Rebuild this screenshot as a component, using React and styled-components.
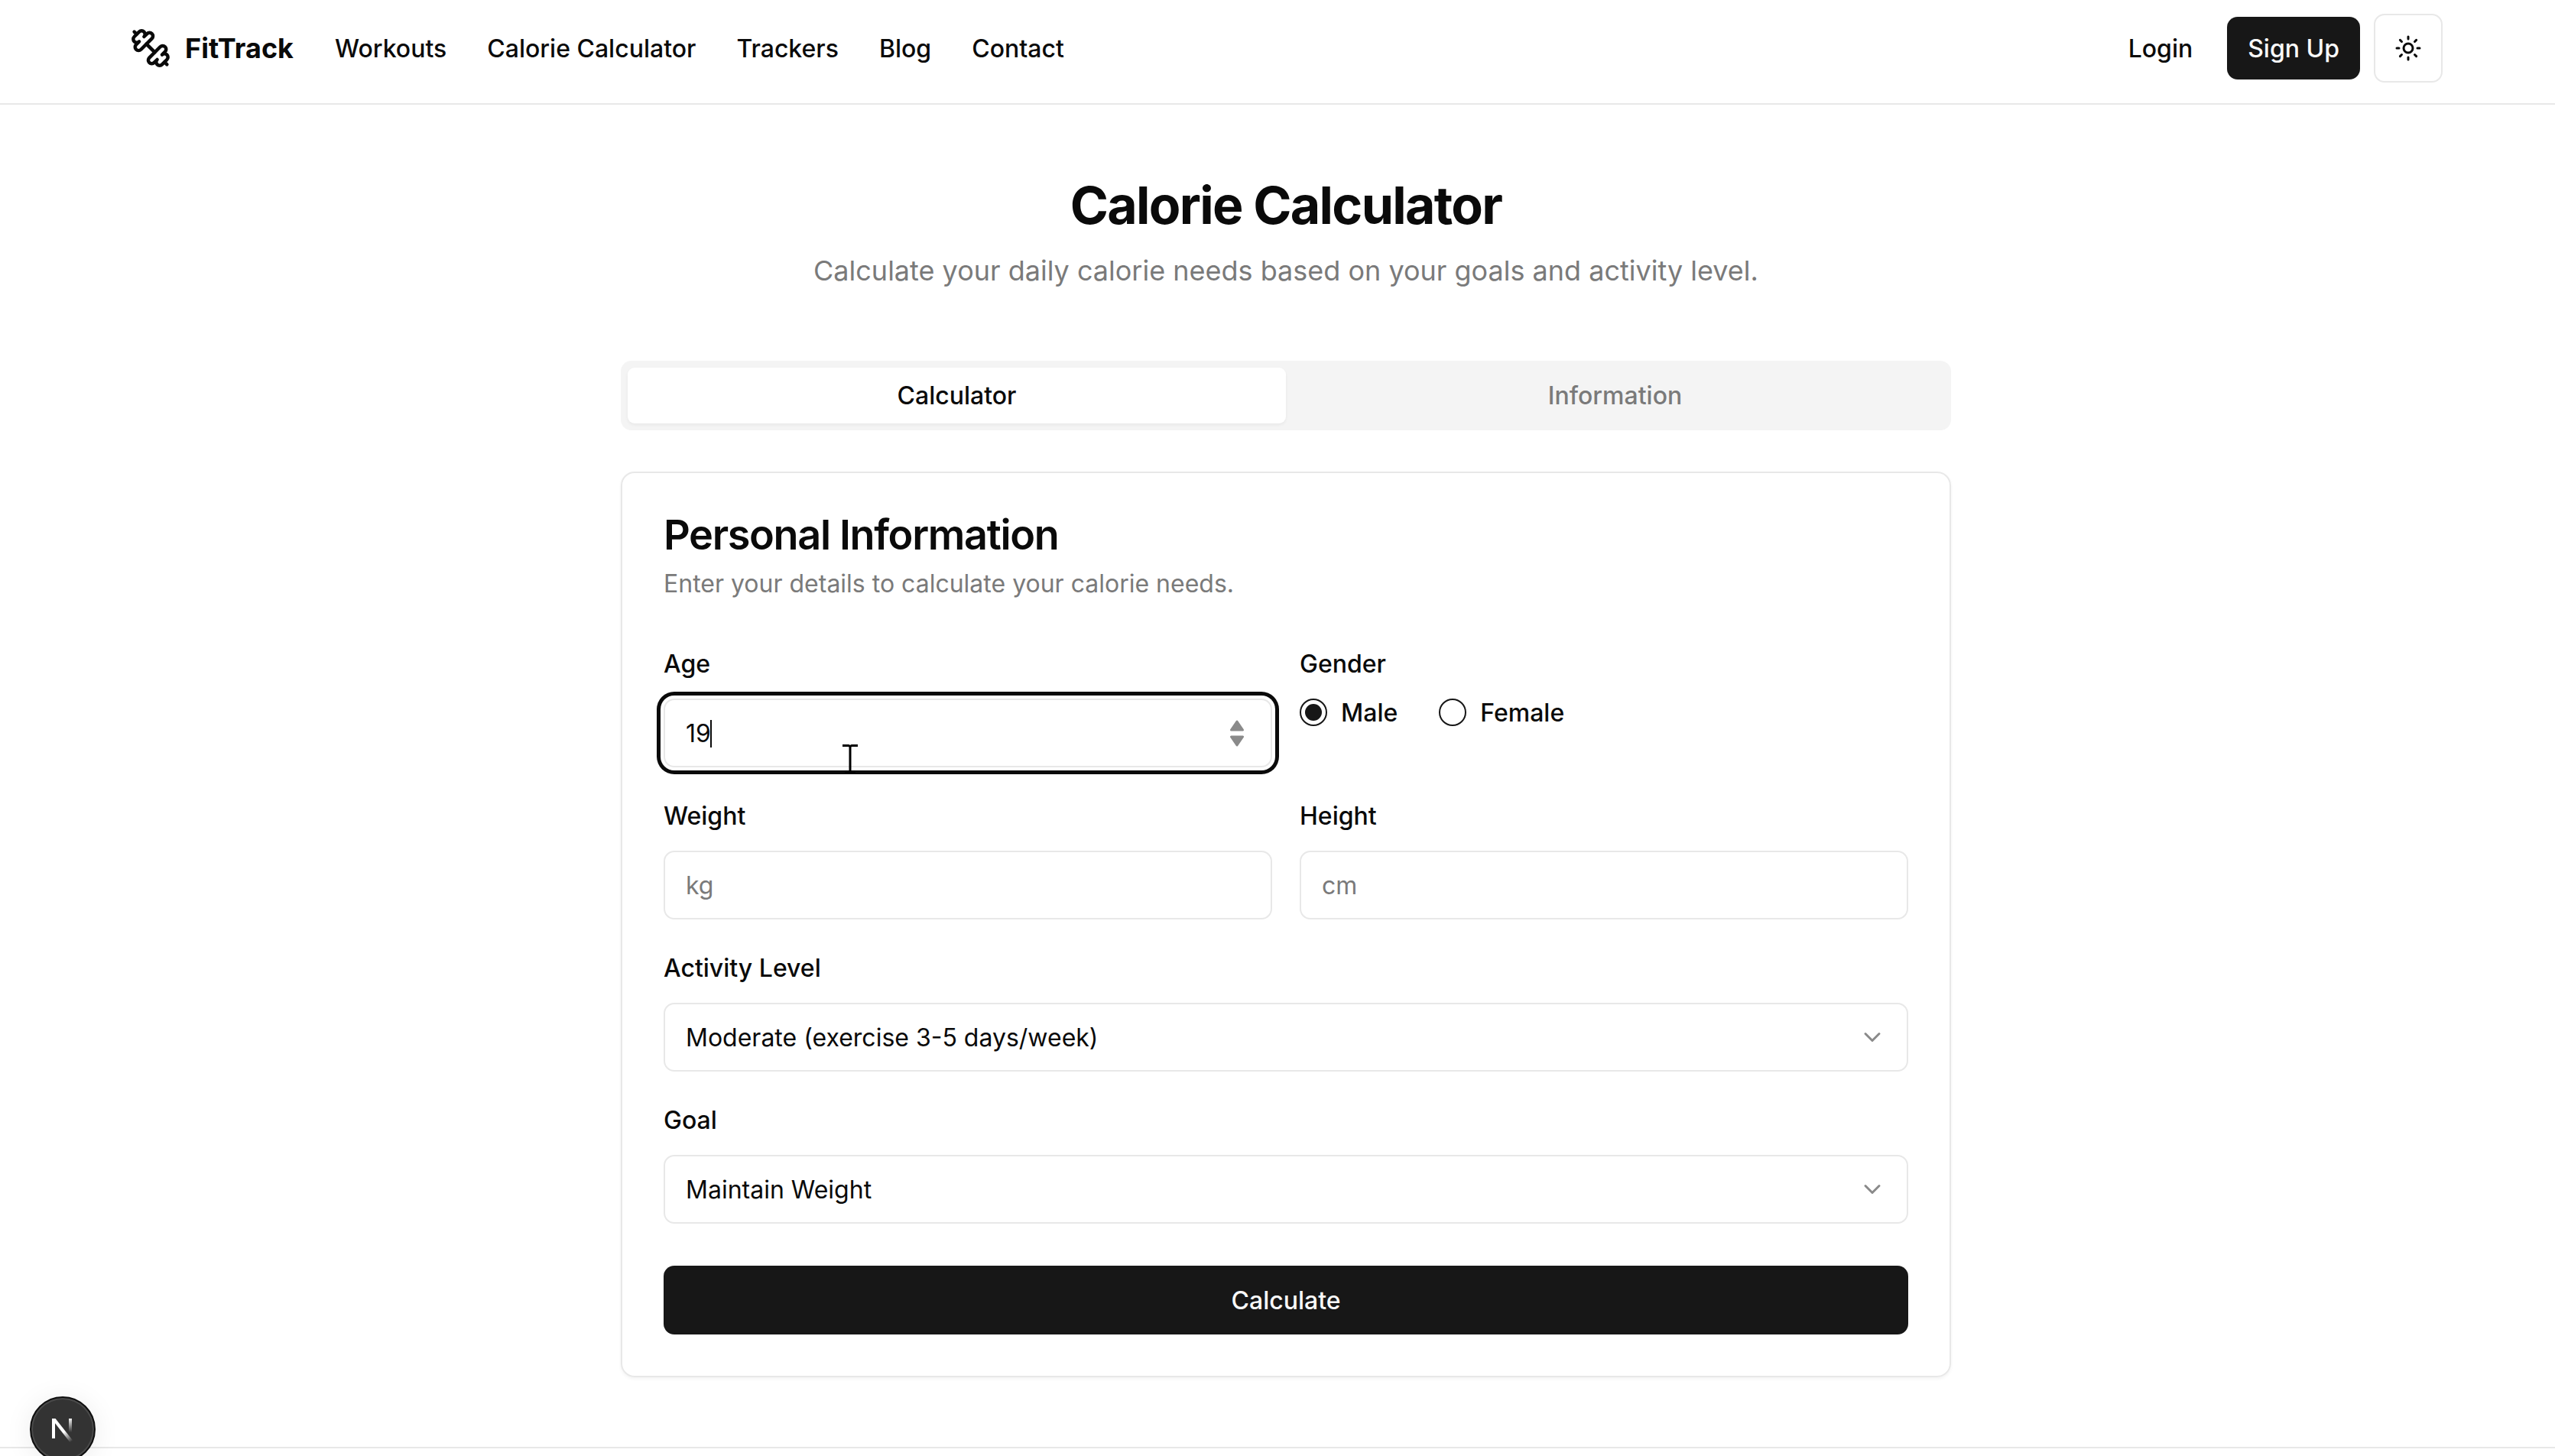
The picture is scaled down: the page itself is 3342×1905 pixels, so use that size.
import React, { useState } from "react";
import styled, { createGlobalStyle, css } from "styled-components";
import { ChevronDown, Sun } from "lucide-react";

const color = {
  ink: "#0a0a0a",
  primary: "#171717",
  onPrimary: "#fafafa",
  muted: "#7a7a7a",
  border: "#e8e8e8",
  track: "#f4f4f4",
  surface: "#ffffff",
};

const GlobalStyle = createGlobalStyle`
  *, *::before, *::after { box-sizing: border-box; }
  body {
    margin: 0;
    background: ${color.surface};
    color: ${color.ink};
    font-family: Inter, "Liberation Sans", sans-serif;
    font-size: 32px;
    font-optical-sizing: none;
    -webkit-font-smoothing: antialiased;
  }
  button, input, select { font: inherit; color: inherit; }
`;

const Page = styled.div`
  display: flex;
  flex-direction: column;
  min-height: 100vh;
`;

const Header = styled.header`
  display: flex;
  align-items: center;
  justify-content: space-between;
  padding: 18px 147px 27px 170px;
  border-bottom: 2px solid ${color.border};
`;

const HeaderGroup = styled.div`
  display: flex;
  align-items: center;
  gap: ${(p) => p.$gap}px;
`;

const Brand = styled.a`
  display: flex;
  align-items: center;
  gap: 18px;
  color: ${color.ink};
  font-size: 36px;
  font-weight: 700;
  text-decoration: none;
`;

const Nav = styled.nav`
  display: flex;
  gap: 53px;
`;

const NavLink = styled.a`
  color: ${color.ink};
  font-weight: 500;
  text-decoration: none;
`;

const buttonBase = css`
  display: flex;
  align-items: center;
  justify-content: center;
  padding: 0 27px;
  border: 0;
  border-radius: 14px;
  font-weight: 500;
  cursor: pointer;
`;

const LoginLink = styled.a`
  ${buttonBase}
  height: 82px;
  color: ${color.ink};
  text-decoration: none;
`;

const PrimaryButton = styled.button`
  ${buttonBase}
  height: ${(p) => (p.$block ? 90 : 82)}px;
  width: ${(p) => (p.$block ? "100%" : "auto")};
  background: ${color.primary};
  color: ${color.onPrimary};
`;

const IconButton = styled.button`
  ${buttonBase}
  width: 90px;
  height: 90px;
  padding: 0;
  border: 2px solid ${color.border};
  background: ${color.surface};
`;

const Main = styled.main`
  padding: 90px 0 91px 22px;
`;

const Container = styled.div`
  max-width: 1740px;
  margin: 0 auto;
`;

const Intro = styled.div`
  display: flex;
  flex-direction: column;
  gap: 18px;
  margin-bottom: 90px;
  text-align: center;
`;

const Title = styled.h1`
  margin: 0;
  font-size: 68px;
  font-weight: 700;
  line-height: 82px;
  letter-spacing: -0.025em;
`;

const Lead = styled.p`
  margin: 0;
  color: ${color.muted};
  font-size: 36px;
  line-height: 55px;
`;

const TabList = styled.div`
  display: grid;
  grid-template-columns: 1fr 1fr;
  height: 91px;
  padding: 9px;
  margin-bottom: 54px;
  border-radius: 14px;
  background: ${color.track};
`;

const Tab = styled.button`
  border: 0;
  border-radius: 9px;
  background: ${(p) => (p.$active ? color.surface : "transparent")};
  color: ${(p) => (p.$active ? color.ink : color.muted)};
  box-shadow: ${(p) => (p.$active ? "0 2px 4px rgba(0, 0, 0, 0.05)" : "none")};
  font-weight: 500;
  cursor: pointer;
`;

const Card = styled.section`
  display: flex;
  flex-direction: column;
  gap: 54px;
  padding: 54px;
  border: 2px solid ${color.border};
  border-radius: 18px;
  box-shadow: 0 2px 4px rgba(0, 0, 0, 0.05);
`;

const CardHeader = styled.div`
  display: flex;
  flex-direction: column;
  gap: 14px;
`;

const CardTitle = styled.h2`
  margin: 0;
  font-size: 54px;
  font-weight: 600;
  line-height: 54px;
  letter-spacing: -0.025em;
`;

const CardText = styled.p`
  margin: 0;
  color: ${color.muted};
  line-height: 46px;
`;

const Form = styled.form`
  display: flex;
  flex-direction: column;
  gap: 55px;
`;

const Fields = styled.div`
  display: grid;
  grid-template-columns: 1fr 1fr;
  gap: 36px;
`;

const Field = styled.div`
  display: flex;
  flex-direction: column;
  gap: 18px;
  grid-column: ${(p) => (p.$wide ? "1 / -1" : "auto")};
`;

const RadioField = styled.fieldset`
  min-width: 0;
  margin: 0;
  padding: 0;
  border: 0;
`;

const labelText = css`
  font-weight: 500;
  line-height: 55px;
`;

const Label = styled.label`
  ${labelText}
`;

const Legend = styled.legend`
  ${labelText}
  padding: 0;
  margin-bottom: 18px;
`;

const Control = styled.div`
  position: relative;
  display: flex;
`;

const controlBox = css`
  width: 100%;
  height: 90px;
  padding: 0 27px;
  border: 2px solid ${color.border};
  border-radius: 14px;
  background: ${color.surface};
  appearance: none;
  outline: none;
`;

const Input = styled.input`
  ${controlBox}
  appearance: textfield;
  box-shadow: ${(p) =>
    p.$ring ? `0 0 0 4px ${color.surface}, 0 0 0 9px ${color.ink}` : "none"};
  &::placeholder { color: ${color.muted}; opacity: 1; }
  &::-webkit-inner-spin-button { appearance: none; margin: 0; }
`;

const Select = styled.select`
  ${controlBox}
`;

const ControlIcon = styled.span`
  position: absolute;
  top: 0;
  bottom: 0;
  right: 29px;
  display: flex;
  align-items: center;
  color: #8a8a8a;
  pointer-events: none;
`;

const Caret = styled.span`
  position: absolute;
  top: 28px;
  left: 61px;
  width: 2px;
  height: 36px;
  background: ${color.ink};
`;

const Pointer = styled.svg`
  position: absolute;
  top: 58px;
  left: 232px;
  pointer-events: none;
`;

const RadioRow = styled.div`
  display: flex;
  gap: 54px;
`;

const RadioOption = styled.label`
  display: flex;
  align-items: center;
  gap: 18px;
  height: 36px;
  font-weight: 500;
`;

const Radio = styled.input`
  display: grid;
  place-items: center;
  width: 36px;
  height: 36px;
  margin: 0;
  border: 2px solid ${color.primary};
  border-radius: 50%;
  background: ${color.surface};
  appearance: none;
  &:checked::before {
    content: "";
    width: 22px;
    height: 22px;
    border-radius: 50%;
    background: ${color.primary};
  }
`;

const Footer = styled.footer`
  flex: 1;
  border-top: 2px solid ${color.border};
`;

const DevBadge = styled.button`
  position: fixed;
  left: 39px;
  bottom: -8px;
  display: grid;
  place-items: center;
  width: 86px;
  height: 86px;
  padding: 0;
  border: 2px solid #0f0f0f;
  border-radius: 50%;
  background: #333333;
  box-shadow: inset 0 0 0 2px #4a4a4a, 0 4px 36px rgba(0, 0, 0, 0.08);
`;

const links = ["Workouts", "Calorie Calculator", "Trackers", "Blog", "Contact"];

function DumbbellMark() {
  return (
    <svg width="54" height="54" viewBox="0 0 24 24" fill="none" stroke="currentColor" strokeWidth="2" strokeLinecap="round" strokeLinejoin="round" aria-hidden="true">
      <path d="M14.4 14.4 9.6 9.6" />
      <path d="M18.657 21.485a2 2 0 1 1-2.829-2.828l-1.767 1.768a2 2 0 1 1-2.829-2.829l6.364-6.364a2 2 0 1 1 2.829 2.829l-1.768 1.767a2 2 0 1 1 2.828 2.829z" />
      <path d="m21.5 21.5-1.4-1.4" />
      <path d="M3.9 3.9 2.5 2.5" />
      <path d="M6.404 12.768a2 2 0 1 1-2.829-2.829l1.768-1.767a2 2 0 1 1-2.828-2.829l2.828-2.828a2 2 0 1 1 2.829 2.828l1.767-1.768a2 2 0 1 1 2.829 2.829z" />
    </svg>
  );
}

function NextMark() {
  return (
    <svg width="32" height="34" viewBox="0 0 32 34" fill="none" aria-hidden="true">
      <defs>
        <linearGradient id="diagonal" x1="18" y1="20" x2="28" y2="33" gradientUnits="userSpaceOnUse">
          <stop stopColor="#fff" />
          <stop offset="1" stopColor="#fff" stopOpacity="0" />
        </linearGradient>
        <linearGradient id="stem" x1="26" y1="2" x2="26" y2="21" gradientUnits="userSpaceOnUse">
          <stop stopColor="#fff" />
          <stop offset="1" stopColor="#fff" stopOpacity="0" />
        </linearGradient>
      </defs>
      <path d="M2 3h4v26H2z" fill="#fff" />
      <path d="M2 3h4.500L29 31.500l-3.500 2.500L2 4z" fill="url(#diagonal)" />
      <path d="M24 3h4v20h-4z" fill="url(#stem)" />
    </svg>
  );
}

export default function App() {
  const [tab, setTab] = useState("Calculator");
  const [age, setAge] = useState("19");
  const [gender, setGender] = useState("Male");

  return (
    <Page>
      <GlobalStyle />
      <Header>
        <HeaderGroup $gap={54}>
          <Brand href="#">
            <DumbbellMark />
            FitTrack
          </Brand>
          <Nav>
            {links.map((name) => (
              <NavLink key={name} href="#">{name}</NavLink>
            ))}
          </Nav>
        </HeaderGroup>
        <HeaderGroup $gap={18}>
          <LoginLink href="#">Login</LoginLink>
          <PrimaryButton type="button">Sign Up</PrimaryButton>
          <IconButton type="button" aria-label="Toggle theme">
            <Sun size={36} aria-hidden="true" />
          </IconButton>
        </HeaderGroup>
      </Header>

      <Main>
        <Container>
          <Intro>
            <Title>Calorie Calculator</Title>
            <Lead>Calculate your daily calorie needs based on your goals and activity level.</Lead>
          </Intro>

          <TabList role="tablist">
            {["Calculator", "Information"].map((name) => (
              <Tab
                key={name}
                type="button"
                role="tab"
                aria-selected={tab === name}
                $active={tab === name}
                onClick={() => setTab(name)}
              >
                {name}
              </Tab>
            ))}
          </TabList>

          <Card>
            <CardHeader>
              <CardTitle>Personal Information</CardTitle>
              <CardText>Enter your details to calculate your calorie needs.</CardText>
            </CardHeader>
            <Form onSubmit={(e) => e.preventDefault()}>
              <Fields>
                <Field>
                  <Label htmlFor="age">Age</Label>
                  <Control>
                    <Input
                      id="age"
                      type="number"
                      $ring
                      value={age}
                      onChange={(e) => setAge(e.target.value)}
                    />
                    <Caret />
                    <ControlIcon>
                      <svg width="36" height="36" viewBox="0 0 36 36" fill="currentColor" stroke="currentColor" strokeWidth="3" strokeLinejoin="round" aria-hidden="true">
                        <path d="M19 3l7.500 11h-15z" />
                        <path d="M19 34l7.500-11h-15z" />
                      </svg>
                    </ControlIcon>
                    <Pointer width="24" height="40" viewBox="0 0 24 40" fill="none" aria-hidden="true">
                      <path d="M2 3.500h8l2 1 2-1h8M12 4v34M5 38h14" stroke="#000" strokeWidth="3" />
                    </Pointer>
                  </Control>
                </Field>

                <RadioField>
                  <Legend>Gender</Legend>
                  <RadioRow>
                    {["Male", "Female"].map((name) => (
                      <RadioOption key={name}>
                        <Radio
                          type="radio"
                          name="gender"
                          value={name}
                          checked={gender === name}
                          onChange={() => setGender(name)}
                        />
                        {name}
                      </RadioOption>
                    ))}
                  </RadioRow>
                </RadioField>

                <Field>
                  <Label htmlFor="weight">Weight</Label>
                  <Input id="weight" type="number" placeholder="kg" />
                </Field>
                <Field>
                  <Label htmlFor="height">Height</Label>
                  <Input id="height" type="number" placeholder="cm" />
                </Field>

                <Field $wide>
                  <Label htmlFor="activity">Activity Level</Label>
                  <Control>
                    <Select id="activity">
                      <option>Moderate (exercise 3-5 days/week)</option>
                    </Select>
                    <ControlIcon><ChevronDown size={36} aria-hidden="true" /></ControlIcon>
                  </Control>
                </Field>
                <Field $wide>
                  <Label htmlFor="goal">Goal</Label>
                  <Control>
                    <Select id="goal">
                      <option>Maintain Weight</option>
                    </Select>
                    <ControlIcon><ChevronDown size={36} aria-hidden="true" /></ControlIcon>
                  </Control>
                </Field>
              </Fields>
              <PrimaryButton type="submit" $block>Calculate</PrimaryButton>
            </Form>
          </Card>
        </Container>
      </Main>

      <Footer />
      <DevBadge type="button" aria-label="Open developer tools">
        <NextMark />
      </DevBadge>
    </Page>
  );
}
